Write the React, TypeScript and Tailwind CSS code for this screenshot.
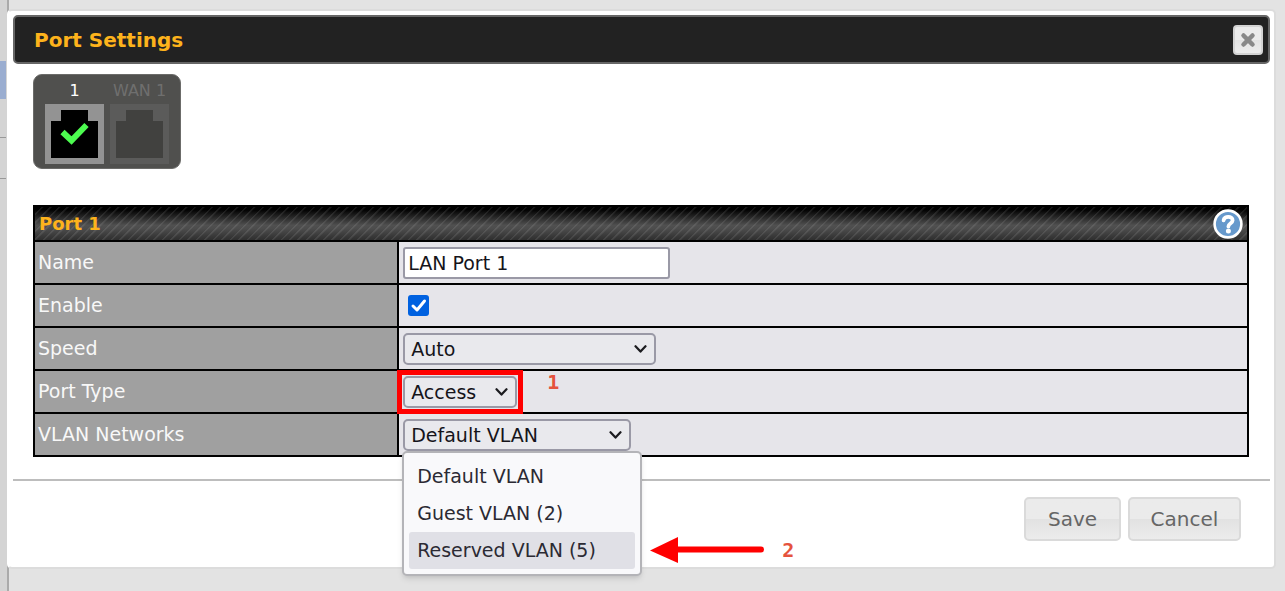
import React from 'react'
import { X } from 'lucide-react'

const rowLabel = 'w-[30%] border-2 border-black bg-[#a0a0a0] px-[3px] text-left font-normal text-[#f8f8f8]'
const rowCell = 'border-2 border-black bg-[#e6e5ea] px-1 py-1'
const selectBox =
  'block h-8 w-full appearance-none rounded-[5px] border-2 border-[#9a99a6] bg-[#e9e9ed] pl-[6px] text-[#15141a]'
const buttonBox =
  'h-[44px] rounded-[5px] border-2 border-[#dadada] bg-linear-to-b from-[#ebebeb] from-50% via-[#e2e2e2] via-50% to-[#ececec] text-xl text-[#666]'

function Chevron() {
  return (
    <svg
      className="pointer-events-none absolute top-[11px] right-[9px]"
      width="13"
      height="10"
      viewBox="0 0 13 10"
      fill="none"
      stroke="#1b1b1f"
      strokeWidth="2.2"
      strokeLinecap="round"
      strokeLinejoin="round"
    >
      <path d="M1.5 2.2 6.5 7.6 11.5 2.2" />
    </svg>
  )
}

function Jack({ active }: { active?: boolean }) {
  return (
    <svg width="59" height="60" viewBox="0 0 59 60">
      <rect width="59" height="60" fill={active ? '#939393' : '#5b5b5a'} />
      <path d="M16 6H43V17H53V54H6V17H16Z" fill={active ? '#000' : '#41413f'} />
      {active && (
        <path d="M17.5 28 26.5 36.5 41.5 21" fill="none" stroke="#4dfc50" strokeWidth="6" />
      )}
    </svg>
  )
}

function PortPanel() {
  return (
    <div className="mt-[10px] ml-5 flex h-[95px] w-[148px] justify-center gap-[6px] rounded-[9px] border border-[#6b6b69] bg-[#50504e] text-base leading-5">
      <div className="flex flex-col items-center pt-[6px]">
        <span className="mb-[3px] text-white">1</span>
        <Jack active />
      </div>
      <div className="flex w-[59px] flex-col items-center pt-[6px]">
        <span className="mb-[3px] whitespace-nowrap text-[#6f6f6e]">WAN 1</span>
        <Jack />
      </div>
    </div>
  )
}

function HelpIcon() {
  return (
    <svg width="30" height="30" viewBox="0 0 30 30" fill="none">
      <circle cx="15" cy="15" r="13.4" fill="#6699cc" stroke="#fff" strokeWidth="2.6" />
      <path
        d="M10.6 11.4C11 6.4 19.8 6.8 19.6 11.4C19.4 14.6 15.4 14.4 15.4 17.4"
        stroke="#fff"
        strokeWidth="3.8"
        strokeLinecap="round"
      />
      <circle cx="15.4" cy="22" r="2.5" fill="#fff" />
    </svg>
  )
}

function VlanMenu() {
  return (
    <ul
      role="listbox"
      aria-label="VLAN Networks options"
      className="absolute top-full -left-px z-10 w-60 rounded-[5px] border-2 border-[#b4b4b8] bg-[#f9f9fb] p-[5px] leading-[37px] text-[#2b2a33] shadow-md"
    >
      <li role="option" aria-selected="false" className="px-2">Default VLAN</li>
      <li role="option" aria-selected="false" className="px-2">Guest VLAN (2)</li>
      <li role="option" aria-selected="true" className="relative rounded-[3px] bg-[#e0e0e6] px-2">
        Reserved VLAN (5)
        <span className="absolute top-0 left-[241px] flex items-center gap-[18px] font-['DejaVu_Sans_Mono',monospace] text-xl leading-[37px] font-bold text-[#e5533d]">
          <svg width="114" height="26" viewBox="0 0 114 26">
            <path d="M28 12.5H111" stroke="#f00" strokeWidth="6" strokeLinecap="round" />
            <path d="M0 13.5 28 0V26Z" fill="#f00" />
          </svg>
          2
        </span>
      </li>
    </ul>
  )
}

function SettingsTable() {
  return (
    <table className="w-full border-collapse border-2 border-black">
      <thead>
        <tr className="h-[35px] bg-[repeating-linear-gradient(135deg,rgba(255,255,255,0.09)_0px,rgba(255,255,255,0.09)_1px,transparent_2px,transparent_6px),linear-gradient(to_bottom,#000_10%,#505050_55%,#4c4c4c_65%,#2c2c2c_100%)]">
          <th colSpan={2} className="px-1 py-0 text-left text-lg font-bold text-[#fdb31c]">
            <div className="flex items-center justify-between">
              Port 1
              <button type="button" aria-label="Help"><HelpIcon /></button>
            </div>
          </th>
        </tr>
      </thead>
      <tbody>
        <tr className="h-[43px]">
          <th scope="row" className={rowLabel}><label htmlFor="name">Name</label></th>
          <td className={rowCell}>
            <input
              id="name"
              type="text"
              defaultValue="LAN Port 1"
              className="block h-8 w-[267px] rounded-[3px] border-2 border-[#9a99a6] bg-white px-[3px] text-[#15141a]"
            />
          </td>
        </tr>
        <tr className="h-[43px]">
          <th scope="row" className={rowLabel}><label htmlFor="enable">Enable</label></th>
          <td className={rowCell}>
            <span className="relative ml-[5px] block size-[21px]">
              <input id="enable" type="checkbox" defaultChecked className="block size-[21px] appearance-none rounded-[3px] bg-[#0061e0]" />
              <svg className="pointer-events-none absolute inset-0" width="21" height="21" viewBox="0 0 21 21" fill="none">
                <path d="M5 11 9 15 16.5 6" stroke="#fff" strokeWidth="3" strokeLinecap="round" strokeLinejoin="round" />
              </svg>
            </span>
          </td>
        </tr>
        <tr className="h-[43px]">
          <th scope="row" className={rowLabel}><label htmlFor="speed">Speed</label></th>
          <td className={rowCell}>
            <div className="relative w-[253px]">
              <select id="speed" className={selectBox}>
                <option>Auto</option>
              </select>
              <Chevron />
            </div>
          </td>
        </tr>
        <tr className="h-[43px]">
          <th scope="row" className={rowLabel}><label htmlFor="type">Port Type</label></th>
          <td className={rowCell}>
            <div className="relative w-[114px]">
              <select id="type" className={selectBox}>
                <option>Access</option>
              </select>
              <Chevron />
              <span className="pointer-events-none absolute -inset-[6px] border-[5px] border-[#f00]" />
              <span className="absolute -top-[6px] left-[144px] font-['DejaVu_Sans_Mono',monospace] text-xl leading-6 font-bold text-[#e5533d]">1</span>
            </div>
          </td>
        </tr>
        <tr className="h-[43px]">
          <th scope="row" className={rowLabel}><label htmlFor="vlan">VLAN Networks</label></th>
          <td className={rowCell}>
            <div className="relative w-[228px]">
              <select id="vlan" className={selectBox}>
                <option>Default VLAN</option>
                <option>Guest VLAN (2)</option>
                <option>Reserved VLAN (5)</option>
              </select>
              <Chevron />
              <VlanMenu />
            </div>
          </td>
        </tr>
      </tbody>
    </table>
  )
}

export default function App() {
  return (
    <div className="relative min-h-screen overflow-hidden bg-[#e3e3e3] font-['DejaVu_Sans',sans-serif] text-[19px]">
      <div className="absolute inset-y-0 left-0 w-[9px] border-r-2 border-[#aaa] bg-[#d4d4d4]">
        <div className="mt-[61px] h-[38px] w-[6px] bg-[#9aadd0]" />
        <div className="mt-[38px] h-[42px] w-[6px] border-y border-[#999]" />
      </div>

      <div role="dialog" aria-label="Port Settings" className="relative mt-[9px] mr-[9px] ml-[7px] rounded-[5px] border-2 border-[#dcdcdc] border-l-white bg-white px-1 pt-1 pb-[26px]">
        <header className="flex h-[49px] items-center justify-between rounded-[5px] border-2 border-[#666] bg-[#222] pr-[5px] pl-[19px]">
          <h1 className="text-xl font-bold text-[#fdb31c]">Port Settings</h1>
          <button type="button" aria-label="Close" className="flex size-[30px] items-center justify-center rounded-[4px] border-2 border-[#d3d3d3] bg-linear-to-b from-[#ebebeb] from-50% via-[#e2e2e2] via-50% to-[#ececec] text-[#888]">
            <X size={18} strokeWidth={6} />
          </button>
        </header>

        <PortPanel />

        <div className="mt-9 mr-[21px] ml-5">
          <SettingsTable />
        </div>

        <footer className="mt-[22px] flex justify-end gap-[7px] border-t-2 border-[#bdbdbd] pt-4 pr-[29px]">
          <button type="button" className={`w-[97px] ${buttonBox}`}>Save</button>
          <button type="button" className={`w-[113px] ${buttonBox}`}>Cancel</button>
        </footer>
      </div>
    </div>
  )
}
